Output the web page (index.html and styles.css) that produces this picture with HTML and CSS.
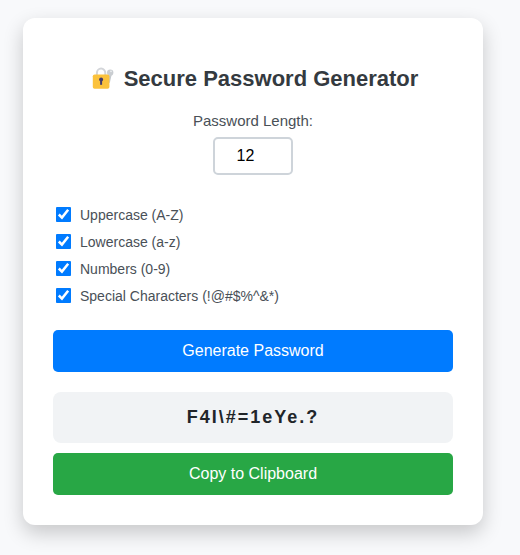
FILE: index.html
```html
<!DOCTYPE html>
<html lang="en">
<head>
<meta charset="utf-8">
<title>Secure Password Generator</title>
<link rel="stylesheet" href="styles.css">
</head>
<body>
<main class="card">
  <h1 class="title">
    <svg class="lock" viewBox="0 0 24 24" aria-hidden="true">
      <path d="M17 8l-1 8 1.8 1 1.8-8z" fill="#c5c9ce"/>
      <circle cx="18.2" cy="6.6" r="3.2" fill="#c9cdd1"/>
      <circle cx="19" cy="5.4" r=".8" fill="#eef0f2"/>
      <path d="M4.9 11V7a4.2 4.4 0 0 1 8.4 0v4" fill="none" stroke="#d3d5d9" stroke-width="2"/>
      <rect x=".8" y="8.4" width="16.6" height="14.3" rx="1.8" fill="#fbc23c"/>
      <circle cx="9.1" cy="13.6" r="2" fill="#433b6b"/>
      <path d="M8.1 13.6h2v5.2h-2z" fill="#433b6b"/>
    </svg>
    <span>Secure Password Generator</span>
  </h1>
  <label class="length-label" for="length">Password Length:</label>
  <input class="length" type="number" id="length" value="12">
  <div class="options">
    <label class="option"><input type="checkbox" checked><span>Uppercase (A-Z)</span></label>
    <label class="option"><input type="checkbox" checked><span>Lowercase (a-z)</span></label>
    <label class="option"><input type="checkbox" checked><span>Numbers (0-9)</span></label>
    <label class="option"><input type="checkbox" checked><span>Special Characters (!@#$%^&amp;*)</span></label>
  </div>
  <button class="button generate">Generate Password</button>
  <div class="password">F4I\#=1eYe.?</div>
  <button class="button copy">Copy to Clipboard</button>
</main>
</body>
</html>
```
FILE: styles.css
```css
* { box-sizing: border-box; }
body {
  min-height: 100vh;
  margin: 0;
  padding: 18px 0 0 23px;
  background: #f8f9fb;
  font-family: "Liberation Sans", Arial, sans-serif;
}
.card {
  display: flex;
  flex-direction: column;
  align-items: center;
  width: 460px;
  height: 507px;
  padding: 48px 30px 30px;
  border-radius: 12px;
  background: #fff;
  box-shadow: 0 8px 20px rgba(0, 0, 0, 0.2);
}
.title {
  display: flex;
  align-items: center;
  gap: 8px;
  height: 26px;
  margin: 0 0 20px;
  padding-left: 4px;
  color: #343a40;
  font-size: 22px;
  line-height: 26px;
  white-space: nowrap;
}
.lock { width: 24px; height: 24px; margin-bottom: 2px; }
.length-label {
  height: 18px;
  margin-bottom: 7px;
  color: #495057;
  font-size: 15px;
  line-height: 18px;
}
.length {
  width: 80px;
  height: 38px;
  margin: 0 0 27px;
  padding: 8px;
  border: 2px solid #ced4da;
  border-radius: 5px;
  color: #000;
  background: #fff;
  font: 16px "Liberation Sans", Arial, sans-serif;
  text-align: center;
}
.options {
  display: flex;
  flex-direction: column;
  gap: 10px;
  align-self: stretch;
  padding-top: 4px;
  margin-bottom: 26px;
}
.option {
  display: flex;
  align-items: center;
  height: 17px;
  color: #495057;
  font-size: 14px;
  line-height: 17px;
}
.option span { padding-top: 2px; }
.option input {
  width: 13px;
  height: 13px;
  margin: 0 10px 0 4px;
  transform: scale(1.2);
  accent-color: #007bff;
}
.button {
  width: 100%;
  height: 42px;
  border: 0;
  border-radius: 5px;
  color: #fff;
  font: 16px "Liberation Sans", Arial, sans-serif;
}
.generate { background: #007bff; }
.copy { background: #28a745; }
.password {
  width: 100%;
  height: 51px;
  margin: 20px 0 10px;
  border-radius: 8px;
  background: #f1f3f5;
  color: #212529;
  font-size: 18px;
  font-weight: bold;
  letter-spacing: 2px;
  line-height: 51px;
  text-align: center;
}
```
